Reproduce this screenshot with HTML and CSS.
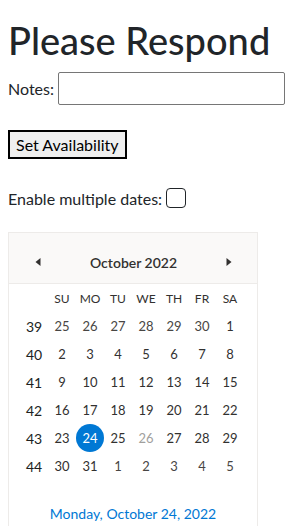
FILE: index.html
```html
<!DOCTYPE html>
<html lang="en">
<head>
    <meta charset="UTF-8">
    <meta name="viewport" content="width=device-width, initial-scale=1.0">
    <title>Please Respond</title>
    <link rel="stylesheet" href="styles.css">
</head>
<body>
    <h1 class="page-title">Please Respond</h1>

    <div class="field-row">
        <label for="notesInput">Notes:</label>
        <input type="text" id="notesInput" class="notes-input">
    </div>

    <button type="button" class="set-btn">Set Availability</button>

    <div class="field-row multi-row">
        <label for="multiDates">Enable multiple dates:</label>
        <input type="checkbox" id="multiDates" class="multi-check">
    </div>

    <div class="calendar">
        <div class="cal-header">
            <button type="button" class="cal-nav">
                <svg width="8" height="8" viewBox="0 0 8 8"><polygon points="6.5,0 6.5,8 1.5,4" fill="#323130"/></svg>
            </button>
            <div class="cal-title">October 2022</div>
            <button type="button" class="cal-nav">
                <svg width="8" height="8" viewBox="0 0 8 8"><polygon points="1.5,0 1.5,8 6.5,4" fill="#323130"/></svg>
            </button>
        </div>

        <div class="cal-grid">
            <span></span>
            <span class="day-name">SU</span>
            <span class="day-name">MO</span>
            <span class="day-name">TU</span>
            <span class="day-name">WE</span>
            <span class="day-name">TH</span>
            <span class="day-name">FR</span>
            <span class="day-name">SA</span>

            <span class="week-no">39</span>
            <span class="day other">25</span>
            <span class="day other">26</span>
            <span class="day other">27</span>
            <span class="day other">28</span>
            <span class="day other">29</span>
            <span class="day other">30</span>
            <span class="day">1</span>

            <span class="week-no">40</span>
            <span class="day">2</span>
            <span class="day">3</span>
            <span class="day">4</span>
            <span class="day">5</span>
            <span class="day">6</span>
            <span class="day">7</span>
            <span class="day">8</span>

            <span class="week-no">41</span>
            <span class="day">9</span>
            <span class="day">10</span>
            <span class="day">11</span>
            <span class="day">12</span>
            <span class="day">13</span>
            <span class="day">14</span>
            <span class="day">15</span>

            <span class="week-no">42</span>
            <span class="day">16</span>
            <span class="day">17</span>
            <span class="day">18</span>
            <span class="day">19</span>
            <span class="day">20</span>
            <span class="day">21</span>
            <span class="day">22</span>

            <span class="week-no">43</span>
            <span class="day">23</span>
            <span class="day selected">24</span>
            <span class="day">25</span>
            <span class="day disabled">26</span>
            <span class="day">27</span>
            <span class="day">28</span>
            <span class="day">29</span>

            <span class="week-no">44</span>
            <span class="day">30</span>
            <span class="day">31</span>
            <span class="day other">1</span>
            <span class="day other">2</span>
            <span class="day other">3</span>
            <span class="day other">4</span>
            <span class="day other">5</span>
        </div>

        <div class="cal-footer">Monday, October 24, 2022</div>
    </div>
</body>
</html>
```

FILE: styles.css
```css
* {
    box-sizing: border-box;
}

body {
    margin: 0;
    padding: 0 8px;
    font-family: 'Segoe UI', Lato, 'Open Sans', sans-serif;
    font-size: 16px;
    color: #212529;
    background: #fff;
}

.page-title {
    font-size: 38px;
    font-weight: 500;
    line-height: 48px;
    margin: 16px 0 8px;
    white-space: nowrap;
}

.field-row {
    display: flex;
    align-items: center;
    gap: 4px;
}

.notes-input {
    width: 234px;
    height: 33px;
    border: 1px solid #767676;
    border-radius: 2px;
    padding: 1px 4px;
    font: inherit;
}

.set-btn {
    display: block;
    margin-top: 25px;
    height: 29px;
    padding: 0 6px;
    border: 2px solid #000;
    border-radius: 0;
    background: #efefef;
    color: #000;
    font: inherit;
}

.multi-row {
    margin-top: 29px;
}

.multi-check {
    appearance: none;
    -webkit-appearance: none;
    width: 20px;
    height: 20px;
    margin: 0;
    border: 1px solid #212529;
    border-radius: 4px;
    background: #fff;
}

.calendar {
    margin-top: 24px;
    width: 250px;
    border: 1px solid #edebe9;
    padding-bottom: 12px;
}

.cal-header {
    display: flex;
    align-items: center;
    justify-content: space-between;
    height: 51px;
    padding: 8px 14px 0 15px;
    background: #faf9f8;
    border-bottom: 1px solid #edebe9;
}

.cal-nav {
    width: 28px;
    height: 28px;
    padding: 0;
    border: none;
    background: transparent;
    display: flex;
    align-items: center;
    justify-content: center;
}

.cal-title {
    font-size: 14px;
    font-weight: 600;
    color: #323130;
}

.cal-grid {
    display: grid;
    grid-template-columns: repeat(8, 28px);
    grid-auto-rows: 28px;
    padding: 0 0 0 11px;
    color: #323130;
}

.cal-grid span {
    display: flex;
    align-items: center;
    justify-content: center;
}

.day-name {
    font-size: 12px;
}

.week-no {
    font-size: 14px;
    color: #201f1e;
}

.day {
    font-size: 13px;
}

.day.other {
    color: #484644;
}

.day.disabled {
    color: #a19f9d;
}

.day.selected {
    background: #0078d4;
    color: #fff;
    border-radius: 50%;
}

.cal-footer {
    margin-top: 24px;
    text-align: center;
    font-size: 14px;
    line-height: 20px;
    color: #0078d4;
}
```
